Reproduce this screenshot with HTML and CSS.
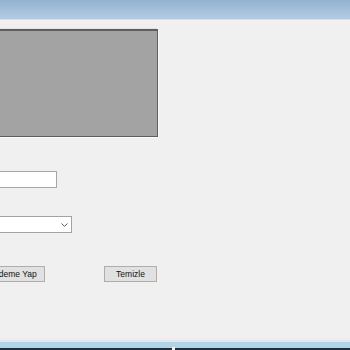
FILE: index.html
```html
<!DOCTYPE html>
<html>
    <head>
        <link rel="stylesheet" href="styles.css">
        <title>Ödeme</title>
    </head>
    <body>
        <div class="window">
            <div class="titlebar"></div>
            <div class="content">
                <div class="picture"></div>
                <input type="text" class="textbox">
                <div class="combo">
                    <svg class="chevron" width="7" height="4" viewBox="0 0 7 4">
                        <path d="M0.5 0.5 L3.5 3.3 L6.5 0.5" fill="none" stroke="#606060" stroke-width="1"/>
                    </svg>
                </div>
                <div class="buttons">
                    <button class="btn btn-pay">Ödeme Yap</button>
                    <button class="btn">Temizle</button>
                </div>
            </div>
            <div class="footer">
                <div class="footer-line"></div>
                <div class="footer-glow"></div>
                <div class="footer-bar"><span class="notch"></span></div>
                <div class="footer-dark"></div>
            </div>
        </div>
    </body>
</html>
```

FILE: styles.css
```css
body {
    margin: 0;
    padding: 0;
    font-family: "Liberation Sans", Arial, sans-serif;
    overflow: hidden;
}

.window {
    width: 350px;
    height: 350px;
    display: flex;
    flex-direction: column;
    background-color: #f0f0f0;
    overflow: hidden;
}

.titlebar {
    height: 19px;
    background: linear-gradient(#92b3d1, #b3cbe3);
    border-bottom: 1px solid #cfe0ee;
    flex-shrink: 0;
}

.content {
    flex: 1;
    margin-left: -20px;
    background: linear-gradient(#f4f0ee, #f0f0f0 8px);
}

.picture {
    width: 176px;
    height: 105px;
    margin-top: 9px;
    background-color: #a3a3a3;
    border: 1px solid #5e5e5e;
    border-top-width: 2px;
    box-shadow: 1px 1px 0 #fbfbfb, -1px -1px 0 #e2e2e2;
}

.textbox {
    display: block;
    width: 77px;
    height: 17px;
    margin: 34px 0 0 0;
    padding: 0;
    box-sizing: border-box;
    border: 1px solid #a6a6a6;
    background: white;
    outline: none;
}

.combo {
    width: 92px;
    height: 17px;
    margin-top: 28px;
    box-sizing: border-box;
    border: 1px solid #a3a3a3;
    background: white;
    display: flex;
    align-items: center;
    justify-content: flex-end;
    padding-right: 3px;
}

.buttons {
    display: flex;
    gap: 59px;
    margin-top: 33px;
    padding-left: 4px;
}

.btn {
    width: 53px;
    height: 16px;
    padding: 0;
    font-family: "Liberation Sans", Arial, sans-serif;
    font-size: 8.5px;
    color: #111;
    background-color: #e1e1e1;
    border: 1px solid #adadad;
    white-space: nowrap;
}

.btn-pay {
    width: 61px;
}

.footer {
    flex-shrink: 0;
    height: 12px;
    display: flex;
    flex-direction: column;
}

.footer-line {
    height: 2px;
    background-color: #f3eaea;
}

.footer-glow {
    height: 2px;
    background-color: #dce9f2;
}

.footer-bar {
    height: 6px;
    background-color: #b2d4e7;
    position: relative;
}

.footer-dark {
    height: 2px;
    background-color: #1f2e3a;
}

.notch {
    position: absolute;
    left: 172px;
    bottom: -2px;
    width: 3px;
    height: 3px;
    background-color: #f4f4f4;
}
```
